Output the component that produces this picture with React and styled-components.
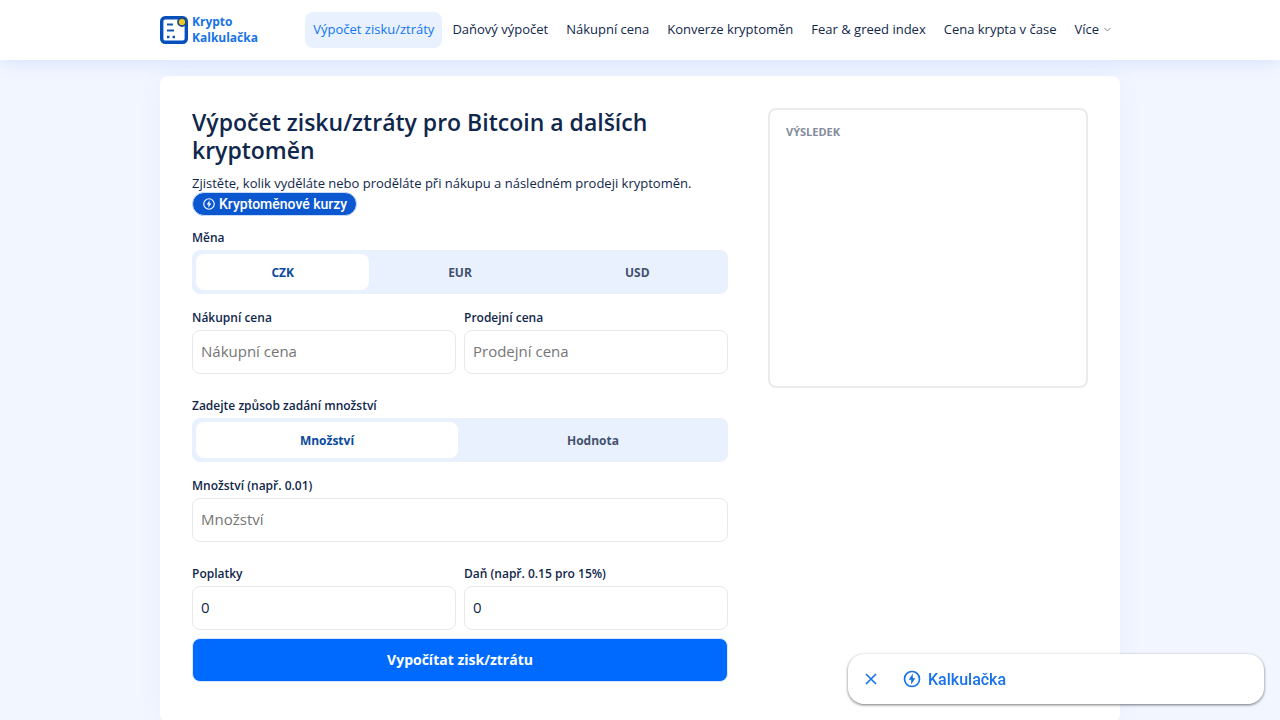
import React, { useState } from "react";
import styled, { createGlobalStyle } from "styled-components";

const GlobalStyle = createGlobalStyle`
  *, *::before, *::after { box-sizing: border-box; }
  body {
    margin: 0;
    background: #f2f6ff;
    color: #10274c;
    font-family: "Trebuchet MS", "Open Sans", "Noto Sans", sans-serif;
    font-size: 13px;
  }
  button, input { font: inherit; color: inherit; }
`;

const Header = styled.header`
  position: relative;
  background: #fff;
  box-shadow: 0 0 20px rgba(70, 125, 235, 0.2);
`;

const HeaderInner = styled.div`
  display: flex;
  align-items: center;
  justify-content: space-between;
  max-width: 960px;
  height: 60px;
  margin: 0 auto;
`;

const Brand = styled.a`
  display: flex;
  align-items: center;
  gap: 4px;
  color: #1673e6;
  font-size: 12px;
  font-weight: 700;
  line-height: 16px;
  text-decoration: none;
`;

const BrandName = styled.span`
  display: flex;
  flex-direction: column;
`;

const Nav = styled.nav`
  display: flex;
  gap: 2px;
`;

const NavLink = styled.a`
  display: flex;
  align-items: center;
  gap: 4px;
  height: 36px;
  padding: 0 8px 2px;
  border-radius: 8px;
  background: ${(p) => (p.$active ? "#e9f1ff" : "transparent")};
  color: ${(p) => (p.$active ? "#1275ee" : "#10274c")};
  text-decoration: none;
  white-space: nowrap;
`;

const Card = styled.main`
  display: grid;
  grid-template-columns: minmax(0, 1fr) 320px;
  align-items: start;
  gap: 40px;
  max-width: 960px;
  margin: 16px auto 0;
  padding: 32px 32px 40px;
  border-radius: 8px;
  background: #fff;
  box-shadow: 0 0 24px rgba(70, 125, 235, 0.06);
`;

const Title = styled.h1`
  margin: 0 0 10px;
  font-size: 23px;
  font-weight: 600;
  line-height: 28px;
`;

const Lead = styled.p`
  margin: 0;
  line-height: 18px;
`;

const RatesPill = styled.button`
  display: flex;
  align-items: center;
  gap: 3px;
  height: 24px;
  margin: 0 0 10px;
  padding: 0 9px;
  border: 1px solid #c9dcfa;
  border-radius: 12px;
  background: #0b57d0;
  color: #fff;
  font-family: Roboto, sans-serif;
  font-size: 14px;
  font-weight: 500;
`;

const Form = styled.form`
  display: flex;
  flex-direction: column;
`;

const Row = styled.div`
  display: grid;
  grid-template-columns: 1fr 1fr;
  gap: 8px;
`;

const Field = styled.label`
  display: block;
  margin-bottom: ${(p) => (p.$last ? "8px" : "20px")};
  font-weight: 600;
  font-size: 12px;
  line-height: 24px;
`;

const Input = styled.input`
  display: block;
  width: 100%;
  height: 44px;
  padding: 0 8px 2px;
  border: 1px solid #e8e8ea;
  border-radius: 8px;
  background: #fff;
  font-size: 15px;
  font-weight: 400;
  &::placeholder { color: #757575; opacity: 1; }
`;

const Group = styled.fieldset`
  min-width: 0;
  margin: 0 0 12px;
  padding: 0;
  border: 0;
`;

const Legend = styled.legend`
  padding: 0;
  font-size: 12px;
  font-weight: 600;
  line-height: 24px;
`;

const Segments = styled.div`
  display: flex;
  gap: 4px;
  padding: 4px;
  border-radius: 8px;
  background: #e9f1ff;
`;

const Segment = styled.button`
  flex: 1 1 0;
  height: 36px;
  padding: 0;
  border: 0;
  border-radius: 8px;
  background: ${(p) => (p.$active ? "#fff" : "transparent")};
  color: ${(p) => (p.$active ? "#0a4a9c" : "#43516e")};
  font-size: 12px;
  font-weight: 700;
`;

const Submit = styled.button`
  height: 44px;
  padding: 0 8px 2px;
  border: 1px solid #d9e8ff;
  border-radius: 8px;
  background: #006aff;
  color: #fff;
  font-size: 14px;
  font-weight: 700;
`;

const Result = styled.section`
  min-height: 280px;
  padding: 14px 16px;
  border: 2px solid #ebebed;
  border-radius: 8px;
`;

const ResultTitle = styled.h2`
  margin: 0;
  color: #848b9a;
  font-size: 11px;
  font-weight: 700;
  line-height: 16px;
  text-transform: uppercase;
`;

const FloatingBar = styled.aside`
  position: fixed;
  right: 16px;
  bottom: 16px;
  display: flex;
  align-items: center;
  gap: 12px;
  width: 416px;
  max-width: calc(100% - 32px);
  height: 50px;
  padding: 0 10px;
  border-radius: 16px;
  background: #fff;
  box-shadow: 0 1px 3px rgba(0, 0, 0, 0.55);
  color: #1a73e8;
`;

const BarButton = styled.button`
  display: flex;
  align-items: center;
  gap: 6px;
  padding: 6px;
  border: 0;
  background: transparent;
  color: #1a73e8;
  font-family: Roboto, sans-serif;
  font-size: 16px;
  font-weight: 500;
`;

function LogoIcon() {
  return (
    <svg width="28" height="28" viewBox="0 0 28 28" fill="none" aria-hidden="true">
      <rect x="1.7" y="1.7" width="24.6" height="24.6" rx="3.5" stroke="#0650bb" strokeWidth="3.4" />
      <path d="M7 8.5h6M7 14.5h7" stroke="#1456b4" strokeWidth="2.2" />
      <path d="M7 21h2.5M12.5 21H15" stroke="#1456b4" strokeWidth="2.6" />
      <circle cx="22" cy="6" r="4" fill="#f6c525" stroke="#1d4f86" strokeWidth="1.8" />
    </svg>
  );
}

function BoltIcon({ size }) {
  return (
    <svg width={size} height={size} viewBox="0 0 24 24" fill="none" aria-hidden="true">
      <circle cx="12" cy="12" r="9" stroke="currentColor" strokeWidth="2" />
      <path d="M13 5.5 8 13h3v5.5L16 11h-3z" fill="currentColor" />
    </svg>
  );
}

function ChevronIcon() {
  return (
    <svg width="9" height="9" viewBox="0 0 9 9" fill="none" aria-hidden="true">
      <path d="m1.5 3 3 3 3-3" stroke="#7c8495" />
    </svg>
  );
}

function CloseIcon() {
  return (
    <svg width="14" height="14" viewBox="0 0 14 14" fill="none" aria-hidden="true">
      <path d="m2 2 10 10M12 2 2 12" stroke="currentColor" strokeWidth="1.7" />
    </svg>
  );
}

function SegmentedField({ label, options }) {
  const [selected, setSelected] = useState(options[0]);
  return (
    <Group>
      <Legend>{label}</Legend>
      <Segments>
        {options.map((option) => (
          <Segment
            key={option}
            type="button"
            aria-pressed={option === selected}
            $active={option === selected}
            onClick={() => setSelected(option)}
          >
            {option}
          </Segment>
        ))}
      </Segments>
    </Group>
  );
}

const links = [
  "Výpočet zisku/ztráty",
  "Daňový výpočet",
  "Nákupní cena",
  "Konverze kryptoměn",
  "Fear & greed index",
  "Cena krypta v čase",
];

export default function App() {
  const [barOpen, setBarOpen] = useState(true);
  return (
    <>
      <GlobalStyle />
      <Header>
        <HeaderInner>
          <Brand href="#">
            <LogoIcon />
            <BrandName>
              <span>Krypto</span>
              <span>Kalkulačka</span>
            </BrandName>
          </Brand>
          <Nav>
            {links.map((text, i) => (
              <NavLink key={text} href="#" $active={i === 0}>{text}</NavLink>
            ))}
            <NavLink href="#">Více <ChevronIcon /></NavLink>
          </Nav>
        </HeaderInner>
      </Header>
      <Card>
        <div>
          <Title>Výpočet zisku/ztráty pro Bitcoin a dalších kryptoměn</Title>
          <Lead>Zjistěte, kolik vyděláte nebo proděláte při nákupu a následném prodeji kryptoměn.</Lead>
          <RatesPill type="button"><BoltIcon size={14} />Kryptoměnové kurzy</RatesPill>
          <Form onSubmit={(e) => e.preventDefault()}>
            <SegmentedField label="Měna" options={["CZK", "EUR", "USD"]} />
            <Row>
              <Field>Nákupní cena<Input placeholder="Nákupní cena" /></Field>
              <Field>Prodejní cena<Input placeholder="Prodejní cena" /></Field>
            </Row>
            <SegmentedField label="Zadejte způsob zadání množství" options={["Množství", "Hodnota"]} />
            <Field>Množství (např. 0.01)<Input placeholder="Množství" /></Field>
            <Row>
              <Field $last>Poplatky<Input defaultValue="0" /></Field>
              <Field $last>Daň (např. 0.15 pro 15%)<Input defaultValue="0" /></Field>
            </Row>
            <Submit type="submit">Vypočítat zisk/ztrátu</Submit>
          </Form>
        </div>
        <Result>
          <ResultTitle>Výsledek</ResultTitle>
        </Result>
      </Card>
      {barOpen && (
        <FloatingBar>
          <BarButton type="button" aria-label="Zavřít" onClick={() => setBarOpen(false)}><CloseIcon /></BarButton>
          <BarButton type="button"><BoltIcon size={20} />Kalkulačka</BarButton>
        </FloatingBar>
      )}
    </>
  );
}
